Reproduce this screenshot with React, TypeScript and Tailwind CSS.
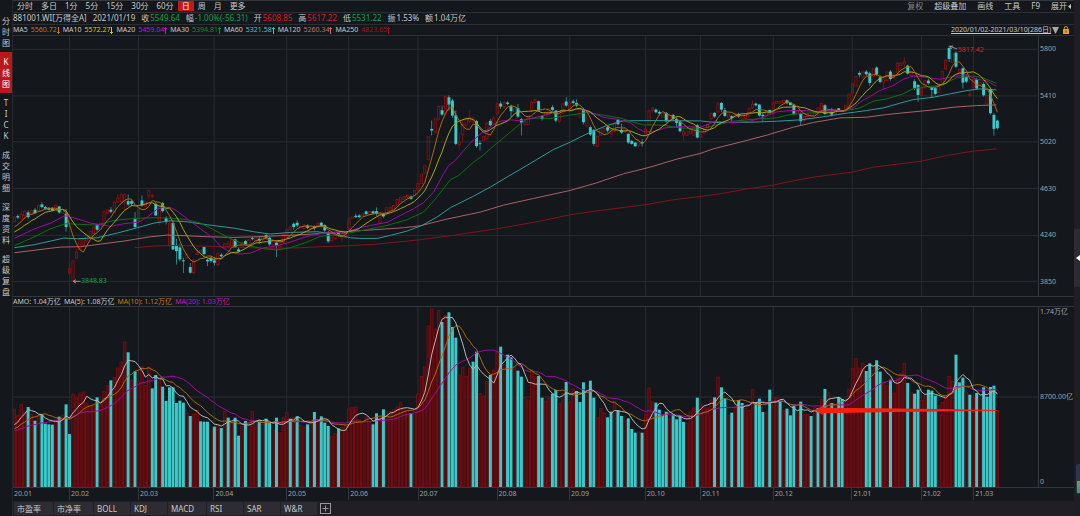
import { useState } from "react";

// Chart space: three units per screen pixel at the default width.
const LEFT = 37;
const RIGHT = 3115;
const PRICE_TOP = 106;
const PRICE_BOTTOM = 887;
const VOL_TOP = 52;
const VOL_BOTTOM = 592;

const barX = (i: number) => 41 + i * 10.358;

// u/d = close above/below open, then body top, body bottom, wick top, wick bottom
const CANDLES = `
u650 664,d647 651 642 656,u642 654 630 660,u632 646 630 655,d636 650 630 655,u631 642 628 645,d628 638 623 641,u615 630 612 632,d612 620 605 624,d620 625 617 628,
d622 628 620 630,d622 630 620 633,u614 628 612 630,d618 636 616 640,u628 638,d640 680 625 693,u805 818 790 822,u782 842 780 845,u755 773 745 776,u718 748,
u718 734 715 740,u706 720,u694 710,u680 700,d672 688 670 693,u668 686,u634 672 630 675,u628 640,d628 634 620 638,u605 636 602 638,
u593 605 582 608,u583 602 578 608,u583 600 578 630,d602 612 582 617,d602 610 598 618,d656 680 635 685,u622 660 618 665,d600 615 585 620,u605 618,u570 586 568 595,
u586 588 580 593,d610 645 605 647,u620 662 610 675,d608 632 605 636,d653 664 648 672,u668 735 662 740,d668 747 660 750,d735 752 715 793,d741 777 730 782,d780 783 772 818,
u762 772 758 776,d800 817 788 820,u783 817 775 820,u758 762 743 764,u750 755,d740 761 737 765,d778 783 775 797,d772 782 768 787,d780 787 770 795,u760 793 755 796,
d763 768 758 772,u730 742 728 744,u730 740 722 745,u718 736,d717 741 715 743,d747 753 742 756,u726 740,d722 732 718 736,u718 734,d713 716 708 720,
u712 720,d715 722 707 730,u710 718 705 722,d704 712 700 716,d712 732 710 736,u722 734,d727 735 723 770,u722 740,u702 726,u688 704 686 712,
u680 688 676 692,d670 680 666 688,d667 675 660 680,u678 682,u673 684,d675 682 672 686,u677 685,d679 683 675 690,u668 680,d667 676 664 680,
d674 690 672 696,d695 723 692 727,u712 722,u702 714,d697 705 695 708,u700 712 698 724,u696 712,u655 685 652 690,u650 653,d646 650 640 653,
d645 650 641 653,u640 646,d633 641 630 644,u633 642,d633 639 630 643,d632 640 621 646,u636 669,d640 648 637 652,u622 640,u620 631,
u615 629,u597 614,u591 602,u588 598,u584 590,d588 595 585 598,u570 586,u549 569,u521 550,u494 518,
u409 478,d385 390 360 405,u355 396 350 400,u318 356 315 360,d329 342 315 346,u287 340 285 342,d290 312 284 330,d300 345 295 352,d344 430 330 434,u425 432 395 447,
u372 403 360 426,u356 374 350 380,u350 362 328 368,u352 364 348 370,d362 437 358 442,d428 431 420 450,u408 420,u368 415 364 420,d361 374 355 378,u352 368 345 372,
u310 340 306 345,d309 318 302 325,u306 318 302 325,d306 310 302 314,d317 332 312 350,u322 334,d323 348 310 352,d356 366 352 405,u362 372,u346 372,
u306 330 300 335,u298 306 295 308,d302 330 300 333,d347 355 343 360,u335 346,u325 340,d320 328 314 332,d330 360 328 365,u340 362 335 368,u310 338 305 340,
d303 315 290 319,u308 324 292 328,d302 307 296 312,d307 315 296 320,u325 350,d326 365 322 372,u355 376 345 380,d380 402 375 406,d388 430 385 436,u408 438 405 440,
u388 405,u384 392,d380 390 376 396,u388 400 385 410,u368 392 365 396,d357 371 354 375,d388 396 370 400,u385 394,d400 426 398 430,d421 430 418 433,
d426 437 424 440,u424 434 415 440,d425 429 415 438,u385 400 375 403,u331 372 328 375,u322 330 320 336,d327 335 324 338,d334 339 330 345,u337 350,d337 362 334 366,
u345 362,d343 355 340 362,d355 367 350 380,d363 392 360 396,u393 404 388 420,u392 404,u386 400,u380 404,d374 411 370 414,u403 410 394 412,
u388 398,u372 382,u339 354 336 358,d337 348 334 352,u310 334 304 337,d307 327 304 335,d329 346 322 350,u341 350,d347 353 343 362,u338 350,
d340 348 336 352,u345 356,u340 354,u324 345 320 352,u312 322 300 325,d309 314 306 318,d312 345 310 348,d343 347 338 362,u332 345,d328 338,
u307 340 304 342,u303 308,u302 308,u300 306,d299 308 297 311,d306 314,d312 340 309 344,u330 340,d339 362 336 374,u348 360 343 366,
u342 348,u344 348,u338 345,u322 345,u308 334,d314 340 311 344,u326 340,d331 342 322 348,u326 338,d323 331,
d330 334,u315 332,u280 320,u250 277 246 282,u228 256,d217 222 212 230,u214 232,d213 221 208 226,d218 247 213 256,u205 228,
d201 222 197 226,d230 244 224 248,u236 245 234 266,u214 240,d213 235 208 240,u220 233,u188 215 183 220,u187 194,u182 190 170 208,d195 219 192 222,
u215 224,d242 262 236 268,d253 283 250 304,u264 284 260 288,u240 262,d240 248 234 252,d262 268 258 292,d263 280 260 284,u250 276,u212 250,
u180 205 176 208,d142 175 135 184,u160 185,d156 198 152 202,u206 216,d203 246 200 264,d228 243 224 247,u281 285 270 290,u235 260 230 268,d236 264 232 268,
u246 256,d250 284 245 288,u285 310,d266 338 262 342,d343 385 338 405,d360 383 358 387`;

// u/d = price above/below the previous close, then the top of the turnover bar
const TURNOVER = `
u358 u378 u344 u366 d352 u375 d393 u380 d375 d402 d404 d405 u390 d381 u376 d344 d433 u314 u325 u313
u307 u340 u350 u347 d323 u340 u306 u288 d272 u263 u235 u217 u157 d188 u271 d245 u277 u232 u287 u232
d296 d256 u265 d291 d334 d293 d293 d340 d333 d339 u372 d379 u374 u362 d395 d396 d396 u418 d411 u405
d415 u366 d384 u400 d384 d438 u410 d394 u405 u365 u400 d392 u404 d387 d398 u421 d384 u430 u384 u369
d387 u384 d380 u408 u412 d404 u395 d367 u395 d380 d399 d409 u441 u431 d416 u414 u408 u358 u354 u352
u391 u397 u382 u399 d404 d371 u385 d359 u370 u365 u360 u352 u339 u358 u362 d370 u365 u313 u260 u232
u109 u58 u118 u62 d97 u77 d68 d112 d144 u256 u233 u260 u235 d216 d186 u311 u319 u275 d256 u241
u188 d171 u225 d195 d203 u232 d243 d261 u323 u331 u241 u262 d259 d324 u334 u325 d312 d301 u341 u312
d277 u337 u298 d304 d337 d278 u303 d273 d324 u383 u356 u370 d383 d366 u337 d362 d379 u391 d386 d418
d429 u427 d429 u374 u295 u336 d339 d360 d379 d366 u388 d374 d389 d380 d397 u400 u367 u355 d324 u343
u352 u355 u331 d323 u262 d293 d327 u378 d369 u350 d331 d340 u356 u362 u300 d338 d327 d367 u368 d300
u325 u323 d334 u362 d357 d377 d348 u372 d336 u374 u374 d379 u352 d355 u329 d298 u310 d340 u345 d322
d328 u335 u298 u237 u206 u235 u221 d244 d221 u228 d212 d246 u275 u287 d270 u310 u265 u252 u221 d280
u310 d312 d300 u332 u318 d300 d303 d318 u347 u338 u318 u260 u275 d195 d278 d264 u307 d315 u324 d310
u327 d293 d321 d292 d288 u362`;

const candles = CANDLES.trim()
  .split(",")
  .map((item) => {
    const text = item.trim();
    const [top, bottom, high = top, low = bottom] = text.slice(1).split(" ").map(Number);
    return { up: text[0] === "u", top, bottom, high, low };
  });

const turnover = TURNOVER.trim()
  .split(/\s+/)
  .map((item) => ({ up: item[0] === "u", top: Number(item.slice(1)) }));

// history holds the values that come before the first visible day
function average(values: number[], size: number, history: number[]) {
  const all = [...history, ...values];
  return values
    .map((_, i) => {
      const end = i + history.length + 1;
      const part = all.slice(end - size, end);
      const mean = part.reduce((a, b) => a + b, 0) / size;
      return `${barX(i).toFixed(1)},${mean.toFixed(1)}`;
    })
    .join(" ");
}

const closes = candles.map((c) => (c.up ? c.top : c.bottom));
const closeHistory = [...Array(5).fill(710), ...Array(4).fill(687)];
const volumes = turnover.map((t) => t.top);
const volumeHistory = [...Array(15).fill(429), ...Array(4).fill(417)];

const PRICE_LINES = [
  {
    color: "#83141a",
    points:
      "402,742 460,737 520,735 600,737 700,740 800,744 900,742 960,739 1020,737 1120,732 1260,718 1350,706 1490,685 1600,666 1710,643 1800,630 1935,613 2020,598 2100,588 2160,580 2250,564 2320,554 2360,545 2440,530 2500,522 2557,515 2620,500 2700,490 2765,482 2840,465 2920,452 2990,445",
  },
  {
    color: "#a96164",
    points:
      "41,757 130,746 180,740 240,739 300,731 370,722 450,709 500,704 560,706 620,709 700,711 770,709 840,706 920,702 980,697 1060,692 1120,688 1210,682 1260,676 1340,656 1440,635 1510,614 1600,594 1710,570 1790,547 1870,520 1950,500 2030,476 2100,459 2140,445 2220,425 2300,404 2380,380 2440,366 2520,352 2600,350 2660,342 2740,334 2800,328 2860,320 2930,315 2990,313",
  },
  {
    color: "#2f9a9b",
    points:
      "41,742 100,733 150,722 190,713 230,715 290,712 350,698 410,682 460,668 510,661 560,664 620,673 700,683 760,694 810,701 870,696 950,694 1000,700 1050,712 1078,714 1130,714 1170,705 1220,692 1265,675 1310,650 1350,622 1420,587 1470,560 1520,530 1580,495 1660,447 1710,425 1760,400 1820,375 1870,361 1930,360 2100,361 2150,366 2250,365 2330,362 2400,358 2460,350 2540,338 2600,330 2650,322 2700,308 2740,297 2800,290 2850,280 2900,270 2940,265 2990,268",
  },
  {
    color: "#0b7016",
    points:
      "41,736 100,710 150,685 195,670 290,674 340,660 400,654 460,652 510,653 560,658 600,668 640,688 690,715 740,735 790,745 830,749 870,742 920,725 960,708 1000,704 1060,695 1110,685 1160,675 1220,658 1270,635 1310,590 1350,538 1375,525 1420,485 1450,463 1470,445 1500,420 1530,395 1560,370 1580,355 1620,352 1650,354 1700,345 1760,336 1800,342 1860,352 1900,365 1930,373 1990,374 2040,382 2100,386 2145,374 2200,362 2270,355 2330,352 2370,342 2420,338 2480,334 2540,330 2580,322 2620,302 2660,295 2710,280 2740,264 2780,258 2820,255 2870,232 2920,226 2950,232 2990,248",
  },
  {
    color: "#9c0aa4",
    points:
      "41,714 100,686 150,668 192,646 230,655 270,668 330,678 370,670 415,665 440,650 470,626 490,620 510,621 530,632 560,655 600,685 640,715 660,738 690,755 715,761 750,758 790,742 830,736 870,725 920,708 970,698 1010,696 1040,694 1078,682 1110,675 1160,666 1200,645 1240,625 1270,606 1300,575 1330,520 1345,495 1365,480 1390,450 1420,418 1445,397 1460,388 1480,372 1500,362 1530,358 1560,360 1600,352 1640,342 1680,332 1740,326 1770,335 1810,350 1850,356 1890,366 1915,385 1935,394 1960,393 1995,382 2040,378 2100,380 2115,375 2145,362 2200,366 2250,362 2290,350 2330,334 2370,330 2420,330 2450,333 2480,330 2530,330 2560,322 2580,305 2610,288 2640,270 2680,255 2710,236 2740,226 2780,230 2820,236 2860,228 2900,222 2930,236 2960,240 2990,257",
  },
  { color: "#a9a616", points: average(closes, 10, closeHistory) },
  { color: "#a9690f", points: average(closes, 5, closeHistory) },
];

const VOLUME_LINES = [
  { color: "#a00aa6", points: average(volumes, 20, volumeHistory) },
  { color: "#a9690a", points: average(volumes, 10, volumeHistory) },
  { color: "#b4b6b8", points: average(volumes, 5, volumeHistory) },
];

const months = [
  { label: "20.01", x: 37 },
  { label: "20.02", x: 207 },
  { label: "20.03", x: 414 },
  { label: "20.04", x: 641 },
  { label: "20.05", x: 859 },
  { label: "20.06", x: 1045 },
  { label: "20.07", x: 1253 },
  { label: "20.08", x: 1491 },
  { label: "20.09", x: 1709 },
  { label: "20.10", x: 1937 },
  { label: "20.11", x: 2101 },
  { label: "20.12", x: 2320 },
  { label: "21.01", x: 2557 },
  { label: "21.02", x: 2765 },
  { label: "21.03", x: 2921 },
];

const periods = ["分时", "多日", "1分", "5分", "15分", "30分", "60分", "日", "周", "月", "更多"];
const views = ["分时图", "K线图", "TICK", "成交明细", "深度资料", "超级复盘"];
const indicators = ["市盈率", "市净率", "BOLL", "KDJ", "MACD", "RSI", "SAR", "W&R"];

const quotes = [
  { label: "收", value: "5549.64", color: "text-[#17a04a]" },
  { label: "幅", value: "-1.00%(-56.31)", color: "text-[#17a04a]" },
  { label: "开", value: "5608.85", color: "text-[#cc2229]" },
  { label: "高", value: "5617.22", color: "text-[#cc2229]" },
  { label: "低", value: "5531.22", color: "text-[#17a04a]" },
  { label: "振", value: "1.53%", color: "text-[#c6c7c9]" },
  { label: "额", value: "1.04万亿", color: "text-[#c6c7c9]" },
];

const averages = [
  { label: "MA5", value: "5560.72", down: true, color: "text-[#c47a0c]" },
  { label: "MA10", value: "5572.27", down: true, color: "text-[#d2d010]" },
  { label: "MA20", value: "5459.04", down: false, color: "text-[#c80fd0]" },
  { label: "MA30", value: "5394.81", down: false, color: "text-[#0f8f1c]" },
  { label: "MA60", value: "5321.58", down: false, color: "text-[#45c3c5]" },
  { label: "MA120", value: "5260.34", down: false, color: "text-[#c9696c]" },
  { label: "MA250", value: "4823.65", down: false, color: "text-[#a3141a]" },
];

function TrendArrow({ down }: { down: boolean }) {
  return (
    <svg className="h-[7px] w-[3px]" viewBox="0 0 3 7" fill="none" stroke="currentColor" aria-hidden="true">
      <path d={down ? "M1.5 0V6.5M0.2 5L1.5 6.5L2.8 5" : "M1.5 7V0.5M0.2 2L1.5 0.5L2.8 2"} />
    </svg>
  );
}

function Grid({ top, bottom, rows }: { top: number; bottom: number; rows: number[] }) {
  return (
    <g stroke="#292c30" strokeWidth={3}>
      {rows.map((y) => (
        <line key={y} x1={LEFT} x2={RIGHT} y1={y} y2={y} />
      ))}
      {months.slice(1).map((m) => (
        <line key={m.x} x1={m.x} x2={m.x} y1={top} y2={bottom} />
      ))}
    </g>
  );
}

function Lines({ lines }: { lines: { color: string; points: string }[] }) {
  return (
    <g fill="none" strokeWidth={3} strokeLinejoin="round">
      {lines.map((line) => (
        <polyline key={line.color} points={line.points} stroke={line.color} />
      ))}
    </g>
  );
}

function PriceChart() {
  const place = (x: number, y: number) => ({
    left: `${((x - LEFT) / (RIGHT - LEFT)) * 100}%`,
    top: `${((y - PRICE_TOP) / (PRICE_BOTTOM - PRICE_TOP)) * 100}%`,
  });

  return (
    <div className="relative min-w-0 flex-1">
      <svg
        className="block h-[260px] w-full"
        viewBox={`${LEFT} ${PRICE_TOP} ${RIGHT - LEFT} ${PRICE_BOTTOM - PRICE_TOP}`}
        preserveAspectRatio="none"
        role="img"
        aria-label="日K线"
      >
        <Grid top={PRICE_TOP} bottom={PRICE_BOTTOM} rows={[146, 286, 424, 564, 705, 843]} />
        {candles.map((c, i) =>
          c.up ? (
            <g key={i} stroke="#970e12" strokeWidth={2.4} fill="none">
              <path d={`M${barX(i)} ${c.high}V${c.top}M${barX(i)} ${c.bottom}V${c.low}`} />
              <rect x={barX(i) - 3.3} y={c.top} width={6.6} height={c.bottom - c.top} />
            </g>
          ) : (
            <g key={i} fill="#3acaca">
              <rect x={barX(i) - 1.2} y={c.high} width={2.4} height={c.low - c.high} opacity={0.75} />
              <rect x={barX(i) - 4.4} y={c.top} width={8.8} height={c.bottom - c.top} />
            </g>
          )
        )}
        <Lines lines={PRICE_LINES} />
        <g fill="none" stroke="#a9abad" strokeWidth={2.4}>
          <path d="M240 843H218M226 838L218 843L226 848" />
          <path d="M2872 145L2850 137M2860 136L2850 137L2856 145" />
        </g>
      </svg>
      <span className="absolute -translate-y-1/2 text-[7px] leading-[10px] text-[#17a04a]" style={place(241, 843)}>
        3848.83
      </span>
      <span className="absolute -translate-y-1/2 text-[7px] leading-[10px] text-[#d8242b]" style={place(2874, 147)}>
        5817.42
      </span>
    </div>
  );
}

function VolumeChart() {
  return (
    <svg
      className="block h-[180px] min-w-0 flex-1"
      viewBox={`${LEFT} ${VOL_TOP} ${RIGHT - LEFT} ${VOL_BOTTOM - VOL_TOP}`}
      preserveAspectRatio="none"
      role="img"
      aria-label="成交额"
    >
      <Grid top={VOL_TOP} bottom={VOL_BOTTOM} rows={[322]} />
      {turnover.map((t, i) =>
        t.up ? (
          <rect
            key={i}
            x={barX(i) - 3.8}
            y={t.top}
            width={7.6}
            height={VOL_BOTTOM - t.top}
            fill="#460e12"
            stroke="#7f0d11"
            strokeWidth={2.4}
          />
        ) : (
          <rect key={i} x={barX(i) - 4.5} y={t.top} width={9} height={VOL_BOTTOM - t.top} fill="#3ac8c8" />
        )
      )}
      <Lines lines={VOLUME_LINES} />
      <path
        d="M2443 362L2470 348V354L2640 356L2860 359L2990 361V364L2860 365L2640 368L2470 371V376Z"
        fill="#f7200f"
      />
    </svg>
  );
}

export default function App() {
  const [period, setPeriod] = useState("日");
  const [view, setView] = useState("K线图");

  return (
    <div className="flex min-h-screen bg-[#14171b] font-['Noto_Sans','Noto_Sans_CJK_SC',sans-serif] text-[8px] leading-[11px] text-[#c6c7c9]">
      <nav className="flex w-3 shrink-0 flex-col pt-[11px]">
        {views.map((name) => (
          <button
            key={name}
            onClick={() => setView(name)}
            className={`flex flex-col items-center py-1 ${view === name ? "bg-[#b8181b] text-white" : ""}`}
          >
            {name.split("").map((char, i) => (
              <span key={i}>{char}</span>
            ))}
          </button>
        ))}
      </nav>

      <main className="flex min-w-0 flex-1 flex-col whitespace-nowrap border-l border-[#24272b]">
        <div className="flex h-3 items-start justify-between border-t border-[#33363a] leading-[10px]">
          <div className="flex">
            {periods.map((name) => (
              <button
                key={name}
                onClick={() => setPeriod(name)}
                className={`px-1 ${period === name ? "bg-[#c4181b] text-white" : ""}`}
              >
                {name}
              </button>
            ))}
          </div>
          <div className="flex gap-[11px] pr-[3px]">
            <button className="text-[#85878a]">复权</button>
            <button>超级叠加</button>
            <button>画线</button>
            <button>工具</button>
            <button>F9</button>
            <button className="flex items-center gap-px">
              展开
              <svg className="h-[5px] w-[3px]" viewBox="0 0 3 5" fill="currentColor" aria-hidden="true">
                <path d="M3 0V5L0 2.5Z" />
              </svg>
            </button>
          </div>
        </div>

        <div className="flex h-3 items-start gap-[6px] border-t border-[#2b2e32] leading-[10px]">
          <span>881001.WI[万得全A]</span>
          <span>2021/01/19</span>
          {quotes.map((q) => (
            <span key={q.label} className="flex gap-px">
              {q.label}
              <span className={q.color}>{q.value}</span>
            </span>
          ))}
        </div>

        <div className="flex h-3 items-center justify-between border-y border-[#2b2e32] text-[7px] leading-[10px]">
          <div className="flex gap-[3px]">
            {averages.map((a) => (
              <span key={a.label} className="flex gap-[3px]">
                {a.label}
                <span className={`flex items-center ${a.color}`}>
                  {a.value}
                  <TrendArrow down={a.down} />
                </span>
              </span>
            ))}
          </div>
          <div className="flex items-center gap-1 pr-[5px]">
            <button className="flex items-center gap-px">
              <span className="underline">2020/01/02-2021/03/10(286日)</span>
              <svg className="h-[7px] w-[7px]" viewBox="0 0 7 7" fill="#a6a8aa" aria-hidden="true">
                <path d="M0 0H7L3.5 7Z" />
              </svg>
            </button>
            <button aria-label="锁定">
              <svg className="block h-2 w-[6px]" viewBox="0 0 6 8" aria-hidden="true">
                <path d="M1.3 4V2.2A1.7 1.7 0 0 1 4.7 2.2V4" fill="none" stroke="#d79a2b" />
                <rect y="3" width="6" height="5" rx="0.5" fill="#e0a233" />
                <path d="M3 4.4V6.6" stroke="#6d4a10" />
              </svg>
            </button>
          </div>
        </div>

        <section className="flex">
          <PriceChart />
          <div className="flex w-9 flex-col justify-between border-l border-[#33363a] pt-2 pb-[9px] pl-px text-[7px] leading-[10px] text-[#9fa1a3]">
            <span>5800</span>
            <span>5410</span>
            <span>5020</span>
            <span>4630</span>
            <span>4240</span>
            <span>3850</span>
          </div>
        </section>

        <div className="flex h-[11px] items-center gap-[3px] border-y border-[#33363a] text-[7px] leading-[9px]">
          <span>AMO: 1.04万亿</span>
          <span>MA(5): 1.08万亿</span>
          <span className="text-[#c47a0c]">MA(10): 1.12万亿</span>
          <span className="text-[#c80fd0]">MA(20): 1.03万亿</span>
        </div>

        <section className="flex">
          <VolumeChart />
          <div className="flex w-9 flex-col justify-between border-l border-[#33363a] pl-px text-[7px] leading-[10px] text-[#9fa1a3]">
            <span>1.74万亿</span>
            <span>8700.00亿</span>
            <span>0</span>
          </div>
        </section>

        <div className="flex border-t border-[#33363a] pr-9 text-[7px] leading-3 text-[#9fa1a3]">
          {months.map((m, i) => (
            <span
              key={m.label}
              className={`min-w-0 basis-0 pl-px ${i > 0 ? "border-l border-[#33363a]" : ""}`}
              style={{ flexGrow: (months[i + 1]?.x ?? RIGHT) - m.x }}
            >
              {m.label}
            </span>
          ))}
        </div>

        <div className="mt-px flex flex-1 items-start gap-px bg-[#211f25] pt-px pl-px">
          {indicators.map((name) => (
            <button key={name} className="min-w-9 bg-[#2d2c32] py-px pr-3 pl-[3px] text-left">
              {name}
            </button>
          ))}
          <button aria-label="添加指标" className="ml-[2px] pt-px">
            <svg className="block h-[11px] w-[11px]" viewBox="0 0 11 11" fill="none" stroke="#96989b" aria-hidden="true">
              <rect x="0.5" y="0.5" width="10" height="10" />
              <path d="M5.5 2.5V8.5M2.5 5.5H8.5" />
            </svg>
          </button>
        </div>
      </main>

      <aside className="flex w-[6px] shrink-0 flex-col justify-between bg-[#1f1e24] pt-[229px] pb-[22px]">
        <button aria-label="展开侧栏" className="flex h-[58px] items-center justify-end bg-[#2d2c33]">
          <svg className="h-[6px] w-1" viewBox="0 0 4 6" fill="#fff" aria-hidden="true">
            <path d="M4 0V6L0 3Z" />
          </svg>
        </button>
        <div className="ml-[2px] flex h-[30px] flex-col justify-end rounded-l-xs bg-[#2f3450] pb-px">
          <div className="ml-px h-3 bg-linear-to-b from-[#7d9c3c] to-[#2c8f80]" />
        </div>
      </aside>
    </div>
  );
}
